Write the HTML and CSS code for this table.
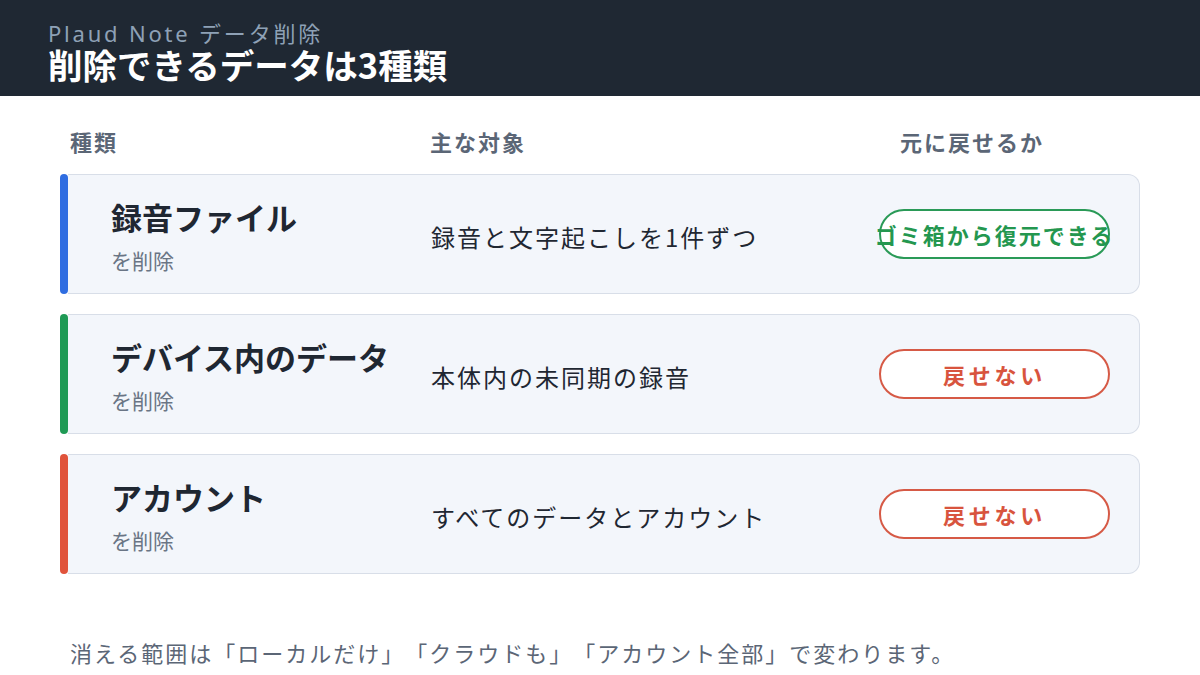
FILE: index.html
```html
<!DOCTYPE html>
<html lang="ja">
<head>
<meta charset="utf-8">
<title>Plaud Note データ削除</title>
<link rel="stylesheet" href="styles.css">
</head>
<body>
<header class="top">
  <div class="eyebrow">Plaud Note データ削除</div>
  <h1 class="title">削除できるデータは3種類</h1>
</header>
<main class="content">
  <div class="thead">
    <div>種類</div>
    <div>主な対象</div>
    <div>元に戻せるか</div>
  </div>
  <div class="rows">
    <div class="card">
      <div class="bar bar-blue"></div>
      <div class="body">
        <div class="kind">
          <div class="kind-name">録音ファイル</div>
          <div class="kind-sub">を削除</div>
        </div>
        <div class="target">録音と文字起こしを1件ずつ</div>
        <div class="pill-cell"><span class="pill pill-green">ゴミ箱から復元できる</span></div>
      </div>
    </div>
    <div class="card">
      <div class="bar bar-green"></div>
      <div class="body">
        <div class="kind">
          <div class="kind-name">デバイス内のデータ</div>
          <div class="kind-sub">を削除</div>
        </div>
        <div class="target">本体内の未同期の録音</div>
        <div class="pill-cell"><span class="pill pill-red">戻せない</span></div>
      </div>
    </div>
    <div class="card">
      <div class="bar bar-red"></div>
      <div class="body">
        <div class="kind">
          <div class="kind-name">アカウント</div>
          <div class="kind-sub">を削除</div>
        </div>
        <div class="target">すべてのデータとアカウント</div>
        <div class="pill-cell"><span class="pill pill-red">戻せない</span></div>
      </div>
    </div>
  </div>
  <p class="note">消える範囲は「ローカルだけ」「クラウドも」「アカウント全部」で変わります。</p>
</main>
</body>
</html>
```

FILE: styles.css
```css
* { box-sizing: border-box; }
html, body { margin: 0; padding: 0; }
body {
  width: 1200px;
  height: 675px;
  overflow: hidden;
  background: #ffffff;
  font-family: "Noto Sans CJK JP", "Noto Sans", sans-serif;
  color: #1f2732;
  text-spacing-trim: space-all;
}
.top {
  background: #1f2833;
  height: 96px;
  padding: 21px 48px 0;
}
.eyebrow {
  font-family: "Noto Sans", "Noto Sans CJK JP", sans-serif;
  font-size: 22px;
  line-height: 24px;
  letter-spacing: 2.8px;
  color: #8ea1b6;
}
.title {
  margin: 0;
  font-size: 34.5px;
  line-height: 38px;
  font-weight: 700;
  color: #ffffff;
}
.content {
  padding: 0 60px;
}
.thead {
  display: grid;
  grid-template-columns: 360px 470px 1fr;
  padding: 29px 10px 0;
  height: 78px;
  font-size: 22px;
  line-height: 32px;
  font-weight: 700;
  letter-spacing: 2px;
  color: #5b6676;
}
.rows {
  display: flex;
  flex-direction: column;
  gap: 20px;
}
.card {
  display: flex;
  height: 120px;
}
.bar {
  width: 8px;
  border-radius: 4px;
  flex: none;
}
.bar-blue { background: #2f6de1; }
.bar-green { background: #1f9a55; }
.bar-red { background: #e0533b; }
.body {
  flex: 1;
  display: grid;
  grid-template-columns: 320px 448px 231px;
  align-items: center;
  background: #f3f6fb;
  border: 1px solid #d8dee8;
  border-left: none;
  border-radius: 0 12px 12px 0;
  padding-left: 43px;
}
.kind-name {
  font-size: 31px;
  line-height: 44px;
  font-weight: 700;
  color: #1f2732;
}
.kind-sub {
  margin-top: 7px;
  font-size: 21px;
  line-height: 28px;
  color: #6a7585;
}
.target {
  font-size: 24px;
  line-height: 32px;
  letter-spacing: 2px;
  padding-top: 6px;
  color: #1f2732;
}
.pill-cell {
  display: flex;
}
.pill {
  width: 231px;
  height: 50px;
  border-radius: 25px;
  border: 2px solid;
  background: #ffffff;
  display: flex;
  align-items: center;
  justify-content: center;
  white-space: nowrap;
  font-size: 22px;
  font-weight: 700;
  letter-spacing: 2px;
}
.pill-green { color: #24974f; border-color: #2a9a57; }
.pill-red { color: #d8543e; border-color: #d65a46; letter-spacing: 3.7px; }
.note {
  margin: 62px 0 0 10px;
  font-size: 22px;
  line-height: 32px;
  letter-spacing: 2px;
  color: #5b6676;
}
```
